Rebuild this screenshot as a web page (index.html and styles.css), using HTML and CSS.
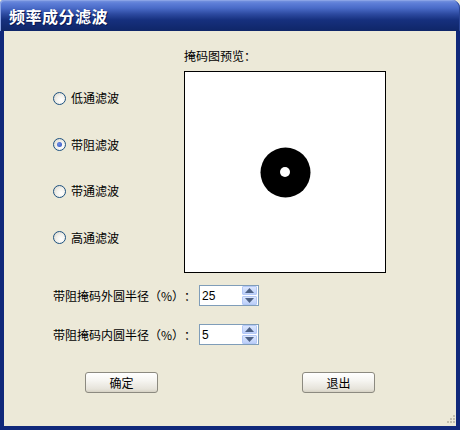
FILE: index.html
```html
<!DOCTYPE html>
<html lang="zh">
<head>
<meta charset="utf-8">
<title>频率成分滤波</title>
<link rel="stylesheet" href="styles.css">
</head>
<body>
<div class="window">
  <div class="titlebar"><span class="title">频率成分滤波</span></div>
  <div class="client">
    <div class="top">
      <div class="radios">
        <label class="radio"><span class="rbox"></span><span>低通滤波</span></label>
        <label class="radio"><span class="rbox checked"></span><span>带阻滤波</span></label>
        <label class="radio"><span class="rbox"></span><span>带通滤波</span></label>
        <label class="radio"><span class="rbox"></span><span>高通滤波</span></label>
      </div>
      <div class="preview">
        <div class="plabel">掩码图预览：</div>
        <div class="pbox">
          <svg width="200" height="200" viewBox="0 0 200 200">
            <circle cx="100.5" cy="100.5" r="25" fill="#000"/>
            <circle cx="100" cy="100" r="5" fill="#fff"/>
          </svg>
        </div>
      </div>
    </div>
    <div class="fields">
      <div class="field">
        <span class="flabel">带阻掩码外圆半径（%）：</span>
        <div class="spin"><span class="val">25</span>
          <div class="sbtns">
            <span class="sbtn"><svg width="9" height="5" viewBox="0 0 9 5"><path d="M0 5 L4.5 0 L9 5Z" fill="#4d6185"/></svg></span>
            <span class="sbtn"><svg width="9" height="5" viewBox="0 0 9 5"><path d="M0 0 L9 0 L4.5 5Z" fill="#4d6185"/></svg></span>
          </div>
        </div>
      </div>
      <div class="field">
        <span class="flabel">带阻掩码内圆半径（%）：</span>
        <div class="spin"><span class="val">5</span>
          <div class="sbtns">
            <span class="sbtn"><svg width="9" height="5" viewBox="0 0 9 5"><path d="M0 5 L4.5 0 L9 5Z" fill="#4d6185"/></svg></span>
            <span class="sbtn"><svg width="9" height="5" viewBox="0 0 9 5"><path d="M0 0 L9 0 L4.5 5Z" fill="#4d6185"/></svg></span>
          </div>
        </div>
      </div>
    </div>
    <div class="buttons">
      <button class="btn">确定</button>
      <button class="btn">退出</button>
    </div>
    <div class="grip">
      <svg width="12" height="12" viewBox="0 0 12 12">
        <rect x="9" y="1" width="2" height="2" fill="#c2bfb0"/>
        <rect x="6" y="4" width="2" height="2" fill="#c2bfb0"/>
        <rect x="9" y="4" width="2" height="2" fill="#c2bfb0"/>
        <rect x="3" y="7" width="2" height="2" fill="#c2bfb0"/>
        <rect x="6" y="7" width="2" height="2" fill="#c2bfb0"/>
        <rect x="9" y="7" width="2" height="2" fill="#c2bfb0"/>
      </svg>
    </div>
  </div>
</div>
</body>
</html>
```
FILE: styles.css
```css
html, body {
  margin: 0;
  padding: 0;
  background: #ece9d8;
}
.window {
  width: 460px;
  height: 430px;
  display: flex;
  flex-direction: column;
  font-family: "Noto Sans CJK SC", "Liberation Sans", sans-serif;
  font-size: 12px;
  color: #000;
  text-spacing-trim: space-all;
}
.titlebar {
  height: 31px;
  flex: none;
  border-radius: 4px 8px 0 0;
  background: linear-gradient(to bottom, #7b98e0 0px, #5f7fd8 3px, #4a6bc8 8px, #2d4aa0 14px, #16307e 20px, #0f2668 31px);
  display: flex;
  align-items: center;
  box-shadow: inset 1px 1px 0 #8aa3e6, inset -1px 0 0 #2a4595;
}
.title {
  color: #fff;
  font-weight: bold;
  font-size: 16px;
  line-height: 18px;
  padding-left: 9px;
  padding-top: 1px;
  letter-spacing: 0.5px;
  text-shadow: 1px 1px 0 #0a1850;
}
.client {
  flex: 1;
  position: relative;
  background: #ece9d8;
  border-left: 4px solid #10287a;
  border-right: 4px solid #10287a;
  border-bottom: 4px solid #10287a;
  display: flex;
  flex-direction: column;
}
.top {
  display: flex;
  padding-top: 17px;
}
.radios {
  width: 131px;
  margin-left: 49px;
  padding-top: 42px;
  display: flex;
  flex-direction: column;
  gap: 30.67px;
}
.radio {
  height: 16px;
  display: flex;
  align-items: center;
  gap: 5px;
  line-height: 16px;
}
.rbox {
  width: 11px;
  height: 11px;
  border: 1px solid #1c5180;
  border-radius: 50%;
  background: radial-gradient(circle at 65% 65%, #ffffff 0%, #f2f1ec 45%, #d4d0c4 100%);
  display: flex;
  align-items: center;
  justify-content: center;
}
.rbox.checked::after {
  content: "";
  width: 5px;
  height: 5px;
  border-radius: 50%;
  background: radial-gradient(circle at 40% 40%, #6f8fe8, #2d4fb8);
}
.preview {
  display: flex;
  flex-direction: column;
}
.plabel {
  height: 16px;
  line-height: 16px;
  margin-bottom: 7px;
}
.pbox {
  width: 200px;
  height: 200px;
  border: 1px solid #000;
  background: #fff;
}
.pbox svg {
  display: block;
}
.fields {
  margin-top: 12px;
  display: flex;
  flex-direction: column;
  gap: 18px;
}
.field {
  display: flex;
  align-items: center;
  padding-left: 49px;
  height: 21px;
}
.flabel {
  width: 146px;
  line-height: 16px;
  white-space: nowrap;
}
.spin {
  width: 58px;
  height: 19px;
  border: 1px solid #7f9db9;
  background: #fff;
  display: flex;
  align-items: center;
  justify-content: space-between;
}
.val {
  padding-left: 2px;
  line-height: 16px;
  font-family: "Liberation Sans", sans-serif;
  font-size: 12px;
}
.sbtns {
  display: flex;
  flex-direction: column;
  gap: 1px;
  margin-right: 1px;
}
.sbtn {
  width: 13px;
  height: 7px;
  border: 1px solid #b4c8f6;
  border-radius: 1px;
  background: linear-gradient(to bottom, #dbe6fd, #bccff9);
  display: flex;
  align-items: center;
  justify-content: center;
}
.sbtn svg {
  display: block;
}
.buttons {
  margin-top: 27px;
  display: flex;
  padding-left: 81px;
  gap: 144px;
}
.btn {
  width: 73px;
  height: 21px;
  padding: 0;
  border: 1px solid #8c8a80;
  border-radius: 3px;
  background: linear-gradient(to bottom, #ffffff 0%, #f6f5f1 40%, #e6e3da 85%, #d6d2c4 100%);
  font-family: "Noto Sans CJK SC", sans-serif;
  font-size: 12px;
  line-height: 16px;
  color: #000;
}
.grip {
  position: absolute;
  right: 0;
  bottom: 0;
  width: 12px;
  height: 12px;
}
.grip svg {
  display: block;
}
```
